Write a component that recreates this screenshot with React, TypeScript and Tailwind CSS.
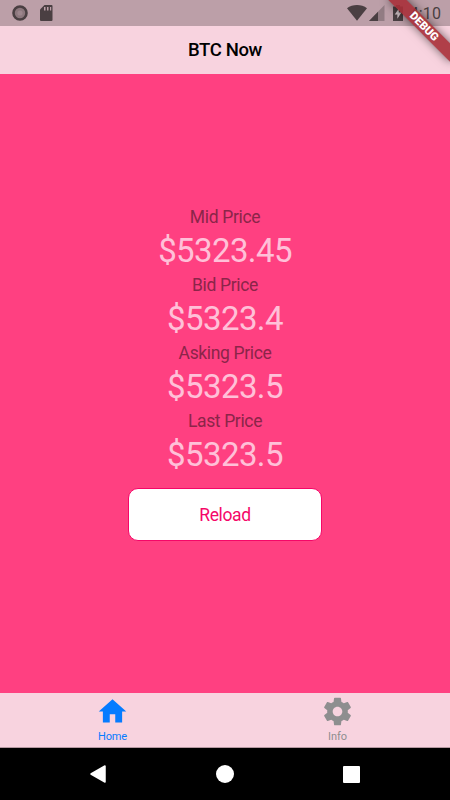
const prices = [
  { label: "Mid Price", value: "$5323.45" },
  { label: "Bid Price", value: "$5323.4" },
  { label: "Asking Price", value: "$5323.5" },
  { label: "Last Price", value: "$5323.5" },
];

function StatusBar() {
  return (
    <div className="flex h-[26px] shrink-0 items-center justify-between bg-[#bc9fa8] pl-3 pr-[9px] text-[#4a3f42]">
      <div className="flex items-center gap-3">
        <svg width="16" height="16" viewBox="0 0 16 16">
          <circle cx="8" cy="8" r="6.5" fill="#8c777d" stroke="#4a3f42" strokeWidth="2.6" />
          <circle cx="8" cy="8" r="2.6" fill="#9d868d" />
        </svg>
        <svg width="13" height="16" viewBox="0 0 13 16">
          <path d="M4.5 0H11.500a1 1 0 0 1 1 1V15a1 1 0 0 1-1 1H1a1 1 0 0 1-1-1V4.500z" fill="currentColor" />
          <path d="M4 2h1.500v3.500H4zM7 2h1.500v3.500H7zM10 2h1.200v3.500H10z" fill="#bc9fa8" />
        </svg>
      </div>
      <div className="flex items-center">
        <svg width="20" height="16" viewBox="0 0 20 16" className="mr-[2px]">
          <path d="M10 15.800L0 3.200C5.500-1 14.500-1 20 3.200z" fill="currentColor" />
        </svg>
        <svg width="16" height="16" viewBox="0 0 16 16" className="mr-[8px]">
          <path d="M15.500 0V16H0z" fill="#927c83" />
          <path d="M9 6.700V16H0z" fill="currentColor" />
        </svg>
        <svg width="10" height="16" viewBox="0 0 10 16" className="mr-[7px]">
          <path d="M3 0h4v1.600h3V16H0V1.600h3z" fill="currentColor" />
          <path d="M5.800 3.500L1.800 9.600h2.600v4.200l4-6.300H5.800z" fill="#d6c7cc" />
        </svg>
        <span className="pt-[2px] text-[16px] leading-none tracking-[0.1px]">4:10</span>
      </div>
    </div>
  );
}

export default function App() {
  return (
    <div className="relative flex h-[800px] w-[450px] flex-col overflow-hidden bg-[#ff4081] font-[Roboto,sans-serif]">
      <StatusBar />

      {/* Navigation bar */}
      <header className="flex h-12 shrink-0 items-center justify-center bg-[#f8d3df] pt-[2px]">
        <h1 className="text-[18.500px] font-medium tracking-[-0.35px] text-black">BTC Now</h1>
      </header>

      {/* Prices */}
      <main className="flex flex-1 flex-col items-center pt-[132px]">
        {prices.map((price) => (
          <div key={price.label} className="flex h-[67.900px] flex-col items-center">
            <p className="h-[23px] text-[17.500px] leading-[23px] tracking-[-0.35px] text-[#8b2549]">
              {price.label}
            </p>
            <p className="text-[33px] leading-[43px] tracking-[-0.6px] text-[#ffc0d8]">{price.value}</p>
          </div>
        ))}
        <button className="mt-[10.500px] h-[53px] w-[194px] rounded-[10px] border border-[#f50768] bg-white pt-px text-[17.500px] tracking-[-0.35px] text-[#f50768]">
          Reload
        </button>
      </main>

      {/* Tabs */}
      <nav className="flex h-[55px] shrink-0 border-b border-[#b598a1] bg-[#f8d3df] text-[11px] leading-[13px]">
        <div className="flex flex-1 flex-col items-center text-[#057bff]">
          <svg width="33" height="33" viewBox="0 0 24 24" className="mt-[2px]" fill="currentColor">
            <path d="M10 20v-6h4v6h5v-8h3L12 3 2 12h3v8z" />
          </svg>
          <span className="mt-[2px] tracking-[-0.1px]">Home</span>
        </div>
        <div className="flex flex-1 flex-col items-center text-[#8e8e8f]">
          <svg width="33" height="33" viewBox="0 0 24 24" className="mt-[2px]" fill="currentColor">
            <path d="M19.430 12.980c.04-.32.07-.64.07-.98s-.03-.66-.07-.98l2.110-1.650c.19-.15.24-.42.12-.64l-2-3.460c-.12-.22-.39-.3-.61-.22l-2.490 1c-.52-.4-1.080-.73-1.690-.98l-.38-2.650A.488.488 0 0 0 14 2h-4c-.25 0-.46.18-.49.42l-.38 2.650c-.61.25-1.170.59-1.690.98l-2.490-1c-.23-.09-.49 0-.61.22l-2 3.460c-.13.22-.07.49.12.64l2.110 1.650c-.04.32-.07.65-.07.98s.03.66.07.98l-2.110 1.650c-.19.15-.24.42-.12.64l2 3.460c.12.22.39.3.61.22l2.490-1c.52.4 1.080.73 1.690.98l.38 2.650c.03.24.24.42.49.42h4c.25 0 .46-.18.49-.42l.38-2.650c.61-.25 1.170-.59 1.690-.98l2.490 1c.23.09.49 0 .61-.22l2-3.460c.12-.22.07-.49-.12-.64zM12 15.500c-1.930 0-3.500-1.570-3.500-3.500s1.570-3.500 3.500-3.500 3.500 1.570 3.500 3.500-1.570 3.500-3.500 3.500z" />
          </svg>
          <span className="mt-[2px] tracking-[-0.1px]">Info</span>
        </div>
      </nav>

      {/* Android buttons */}
      <div className="flex h-[52px] shrink-0 items-center justify-between bg-black pl-[90px] pr-[90px]">
        <svg width="16" height="18" viewBox="0 0 16 18">
          <path d="M15 1V17L1 9z" fill="white" stroke="white" strokeWidth="1.500" strokeLinejoin="round" />
        </svg>
        <div className="size-[18px] rounded-full bg-white"></div>
        <div className="size-[17px] rounded-[1px] bg-white"></div>
      </div>

      {/* Debug ribbon */}
      <div className="absolute left-[379.700px] top-[19.700px] flex h-[13.100px] w-[88px] rotate-45 items-center justify-center bg-[#a72f39]/90 text-[11.200px] font-black leading-none text-white shadow-[0_0_10px_rgba(0,0,0,0.55)]">
        DEBUG
      </div>
    </div>
  );
}
